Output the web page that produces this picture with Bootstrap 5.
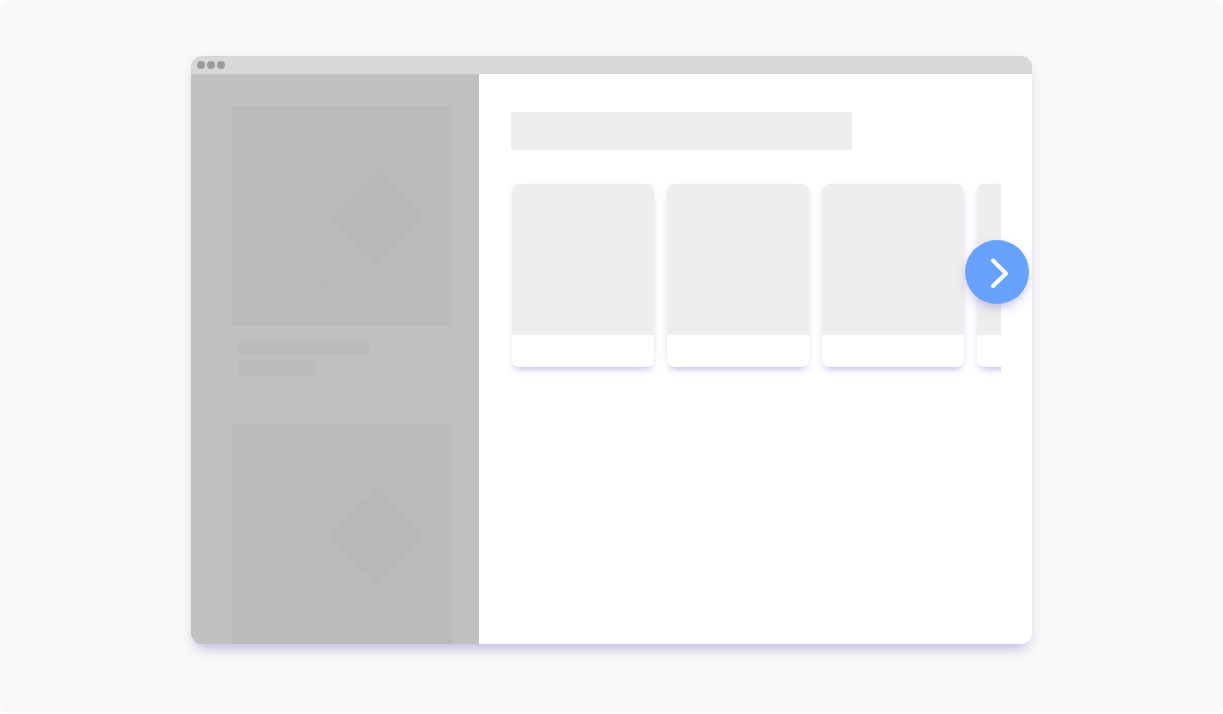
<!DOCTYPE html>
<html lang="en">
<head>
<meta charset="utf-8">
<meta name="viewport" content="width=device-width, initial-scale=1">
<title>Carousel wireframe</title>
<link href="https://cdn.jsdelivr.net/npm/bootstrap@5.3.0/dist/css/bootstrap.min.css" rel="stylesheet">
<style>
  body { background: #fff; font-family: "Liberation Sans", Arial, sans-serif; }
  .stage { background: #f9f9f9; border-radius: 8px; min-height: calc(100vh - 1px); padding: 56px 16px 68px; }
  .window { max-width: 841px; border-radius: 11px; background: #fff;
    box-shadow: 0 10px 14px -6px rgba(80, 64, 180, .32), 0 3px 12px rgba(80, 64, 180, .07); }
  .titlebar { height: 18px; background: #d8d8d8; padding-left: 6px; gap: 2px; border-radius: 11px 11px 0 0; }
  .dot { width: 8px; height: 8px; background: #9b9b9b; }
  .window-body { border-radius: 0 0 11px 11px; }
  .side { flex: 0 0 288px; background: #c0c0c0; padding: 32px 27px 0 41px; }
  .tile { background: #bbb; height: 220px; }
  .lines { padding: 14px 0 49px 6px; gap: 7px; }
  .line-bar { height: 14px; background: #bbb; border-radius: 1px; }
  .line-long { width: 131px; }
  .line-short { width: 77px; }
  .pane { padding: 38px 31px 32px 32px; min-width: 0; }
  .heading-bar { max-width: 341px; height: 38px; background: #eee; border-radius: 2px; }
  .carousel-area { margin-top: 34px; }
  .track { gap: 13px; padding-left: 1px; clip-path: inset(-30px 0 -30px -30px); }
  .item { flex: 0 0 142px; border-radius: 7px; background: #fff;
    box-shadow: 0 5px 7px -4px rgba(80, 64, 180, .4), 0 3px 12px rgba(80, 64, 180, .06); }
  .item-image { height: 151px; background: #eee; }
  .item-foot { height: 32px; }
  .next { width: 64px; height: 64px; right: -28px; top: 56px; background: #69a1ff;
    box-shadow: 0 6px 10px -3px rgba(80, 64, 180, .25), 0 4px 14px rgba(80, 64, 180, .1); }
</style>
</head>
<body>
<div class="stage">
  <div class="window mx-auto">
    <div class="titlebar d-flex align-items-center">
      <span class="dot rounded-circle"></span>
      <span class="dot rounded-circle"></span>
      <span class="dot rounded-circle"></span>
    </div>
    <div class="window-body d-flex overflow-hidden">
      <aside class="side">
        <div class="tile">
          <svg class="d-block w-100 h-100" viewBox="0 0 220 220" aria-hidden="true">
            <path d="M94.500 46L163 113L93.500 180.500L26.500 113Z" fill="none" stroke="#b9b9b9" stroke-width="2"/>
            <path d="M145 64L192 111L144 159L97 112Z" fill="#b8b8b8"/>
          </svg>
        </div>
        <div class="lines d-flex flex-column">
          <div class="line-bar line-long"></div>
          <div class="line-bar line-short"></div>
        </div>
        <div class="tile">
          <svg class="d-block w-100 h-100" viewBox="0 0 220 220" aria-hidden="true">
            <path d="M94.500 46L163 113L93.500 180.500L26.500 113Z" fill="none" stroke="#b9b9b9" stroke-width="2"/>
            <path d="M145 64L192 111L144 159L97 112Z" fill="#b8b8b8"/>
          </svg>
        </div>
      </aside>
      <main class="pane flex-grow-1">
        <div class="heading-bar"></div>
        <div class="carousel-area position-relative">
          <div class="track d-flex">
            <div class="item overflow-hidden"><div class="item-image"></div><div class="item-foot"></div></div>
            <div class="item overflow-hidden"><div class="item-image"></div><div class="item-foot"></div></div>
            <div class="item overflow-hidden"><div class="item-image"></div><div class="item-foot"></div></div>
            <div class="item overflow-hidden"><div class="item-image"></div><div class="item-foot"></div></div>
          </div>
          <button type="button" class="next position-absolute border-0 rounded-circle p-0" aria-label="Next">
            <svg class="d-block" width="64" height="64" viewBox="0 0 64 64" fill="none" stroke="#fff" stroke-width="4" stroke-linecap="round" stroke-linejoin="round" aria-hidden="true"><path d="M28 20.500L41 33.500L28 46"/></svg>
          </button>
        </div>
      </main>
    </div>
  </div>
</div>
<script src="https://cdn.jsdelivr.net/npm/bootstrap@5.3.0/dist/js/bootstrap.bundle.min.js"></script>
</body>
</html>
